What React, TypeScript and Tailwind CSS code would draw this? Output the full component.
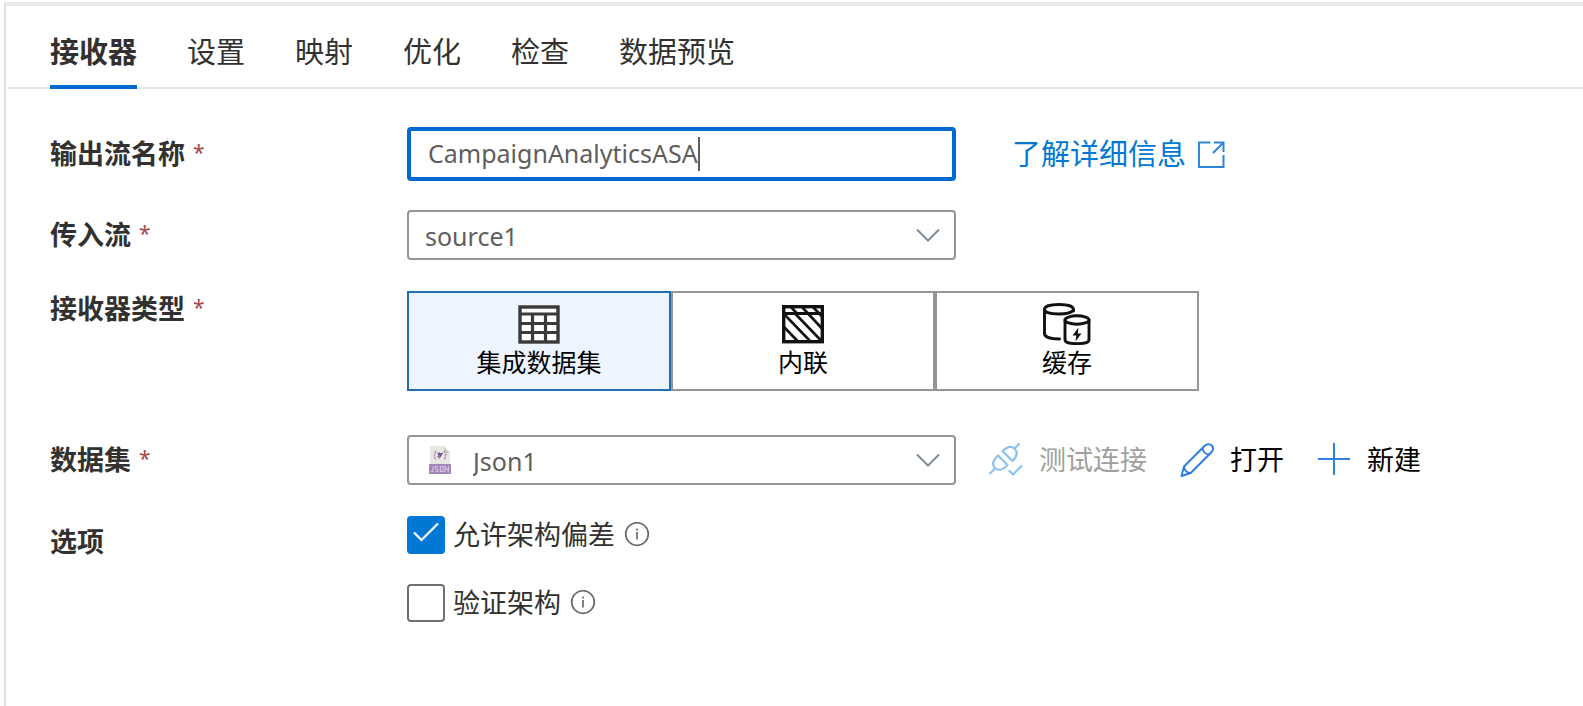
import type { ReactNode } from "react";

const tabs = ["接收器", "设置", "映射", "优化", "检查", "数据预览"];

function Label({ children, htmlFor, required }: { children: ReactNode; htmlFor?: string; required?: boolean }) {
  return (
    <label htmlFor={htmlFor} className="flex h-9 w-[357px] shrink-0 items-center gap-2 text-[27px] font-bold text-[#323130]">
      <span>{children}</span>
      {required && <span className="pb-0.5 text-[21px] font-normal text-[#a4474a]">*</span>}
    </label>
  );
}

function Chevron() {
  return (
    <svg className="pointer-events-none absolute top-0 right-4 h-full w-6" viewBox="0 0 24 46" fill="none" stroke="#7d8c99" strokeWidth="2">
      <path d="M1 17.5 12 28.5 23 17.5" />
    </svg>
  );
}

function TableIcon() {
  return (
    <svg width="48" height="42" viewBox="0 0 48 42" fill="none">
      <rect x="5" y="4" width="38" height="35" fill="#fff" stroke="#3b3a39" strokeWidth="3.4" />
      <path d="M5 11H43M5 20.5H43M5 29.5H43M17.5 11V39M30.5 11V39" stroke="#3b3a39" strokeWidth="3.2" />
    </svg>
  );
}

function InlineIcon() {
  return (
    <svg width="48" height="42" viewBox="0 0 48 42" fill="none" stroke="#111" strokeWidth="2.6">
      <rect x="4.7" y="3.7" width="38.6" height="35" strokeWidth="3.4" />
      <path d="M5 10.5H43" strokeWidth="2.8" />
      <path d="M12 4 18 10.5M23 4 29 10.5M34 4 43 13.5M5 24 19 38.5M5 11 31.5 38.5M16 10.5 43 38.5M29 10.5 43 25.5" />
    </svg>
  );
}

function CacheIcon() {
  return (
    <svg width="48" height="42" viewBox="0 0 48 42" fill="none" stroke="#111" strokeWidth="2.9" strokeLinecap="round">
      <path d="M30.500 8V6.500C30.500 3.500 25 1.500 16 1.500S1.500 3.500 1.500 6.500V30.500C1.500 34 8 36 16.500 36" />
      <path d="M1.500 6.500C1.500 9.500 8 11 16 11C23 11 28 10 30 7.500" />
      <ellipse cx="34" cy="17" rx="12" ry="4.200" fill="#fff" />
      <path d="M22 17V36.500C22 40 26.500 40.600 34 40.600S46 40 46 36.500V17" />
      <path d="M35.500 24.500 29.500 32.500H33.300L32.500 38.500 38.500 30.500H34.800Z" fill="#111" stroke="none" />
    </svg>
  );
}

function JsonIcon() {
  return (
    <svg className="shrink-0" width="22" height="28" viewBox="0 0 22 28">
      <path d="M1 0H15L21 7V19H1Z" fill="#e9e8e0" />
      <path d="M15 0 21 7H15Z" fill="#cfcfc2" />
      <path d="M7 5Q4 9.500 7 14M15 5Q18 9.500 15 14" fill="none" stroke="#a287b8" strokeWidth="1.500" strokeDasharray="2 1" />
      <path d="M8 7H14L11 12Z" fill="#6f4790" />
      <path d="M10 6V13M8 11 14 7" stroke="#8a67a6" strokeWidth="1" />
      <rect x="0" y="18" width="22" height="10" fill="#a588bb" />
      <path d="M4 20.500V25.500H2M9 20.500H6.500V23H9V25.500H6.500M11.500 20.500H14V25.500H11.500ZM16 26V20.500L19.500 25.500V20" fill="none" stroke="#d3c3df" strokeWidth="1.100" />
    </svg>
  );
}

function PlugIcon() {
  return (
    <svg width="34" height="34" viewBox="0 0 34 34" fill="none" stroke="#8cc2ee" strokeWidth="2.200" strokeLinecap="round" strokeLinejoin="round">
      <path d="M1 30.500 6 25.500" />
      <path d="M9 12.500 18.500 22C14.500 26.500 9.500 28 6 25C2.500 21.500 4 17 9 12.500Z" />
      <path d="M13.500 8 23.500 18C28 13.500 29 9 25.500 5.500C22 2.500 17.500 4 13.500 8Z" />
      <path d="M25.500 5.500 30 1" />
      <path d="M20.500 28 24 31.500 32.500 23" />
    </svg>
  );
}

function PencilIcon() {
  return (
    <svg width="34" height="34" viewBox="0 0 34 34" fill="none" stroke="#2a7fdc" strokeWidth="1.900" strokeLinejoin="round">
      <path d="M1.500 33 4 23.500 24.500 3C27 0.500 30 0.800 31.700 2.500S33.500 7 31.200 9.500L10.700 30Z" />
      <path d="M22.500 5C23 9 25.500 11.500 29.500 11.500M4 23.500C4.500 27.500 7 29.800 10.700 30" />
    </svg>
  );
}

function PlusIcon() {
  return (
    <svg width="34" height="34" viewBox="0 0 34 34" fill="none" stroke="#2f80e0" strokeWidth="2">
      <path d="M1 16H33M17 0V32" />
    </svg>
  );
}

function InfoIcon() {
  return (
    <svg width="26" height="26" viewBox="0 0 26 26" fill="none" stroke="#6b6967" strokeWidth="1.700">
      <circle cx="13" cy="12" r="11.300" />
      <path d="M13 10V17.500M13 6.500V8.500" />
    </svg>
  );
}

function SinkType({ icon, children, selected }: { icon: ReactNode; children: ReactNode; selected?: boolean }) {
  return (
    <button
      type="button"
      aria-pressed={!!selected}
      className={
        "flex h-[100px] w-[264px] flex-col items-center border-2 pt-2.5 text-[25px] leading-[34px] text-black " +
        (selected ? "border-[#1f6fb2] bg-[#eff5ff]" : "border-[#979593] bg-white")
      }
    >
      {icon}
      <span>{children}</span>
    </button>
  );
}

function Option({ id, label, defaultChecked }: { id: string; label: string; defaultChecked?: boolean }) {
  return (
    <div className="flex h-[38px] items-center">
      <span className="relative flex">
        <input
          id={id}
          type="checkbox"
          defaultChecked={defaultChecked}
          className="peer size-[38px] appearance-none rounded-[4px] border-2 border-[#72706e] bg-white checked:border-[#0078d4] checked:bg-[#0078d4]"
        />
        <svg className="pointer-events-none absolute inset-0 hidden peer-checked:block" width="38" height="38" viewBox="0 0 38 38" fill="none" stroke="#fff" strokeWidth="2.200">
          <path d="M7 16.500 14.500 24 31 7.500" />
        </svg>
      </span>
      <label htmlFor={id} className="ml-2 text-[27px] text-[#323130]">{label}</label>
      <button type="button" aria-label="信息" className="ml-[9px]">
        <InfoIcon />
      </button>
    </div>
  );
}

export default function App() {
  return (
    <main className="min-h-screen bg-white pt-0.5 pl-1 font-['Noto_Sans','Noto_Sans_CJK_SC',sans-serif]">
      <div className="min-h-[704px] border-t-4 border-l-2 border-t-[#ebebeb] border-l-[#e1e1e1]">
        <nav className="ml-0.5 flex h-[83px] gap-[50px] border-b-2 border-[#e3e3e3] pl-[42px]">
          {tabs.map((tab, i) => (
            <button
              key={tab}
              type="button"
              className={
                "-mb-0.5 border-b-4 pt-3 text-[29px] text-[#323130] " +
                (i === 0 ? "border-[#0069d2] font-bold" : "border-transparent")
              }
            >
              {tab}
            </button>
          ))}
        </nav>

        <form className="flex flex-col pt-[38px] pl-11">
          <div className="flex items-center">
            <Label htmlFor="stream" required>输出流名称</Label>
            <div className="flex h-[54px] w-[549px] items-center rounded-[4px] border-4 border-[#0069d2] pl-[17px]">
              <input
                id="stream"
                defaultValue="CampaignAnalyticsASA"
                className="[field-sizing:content] bg-transparent text-[25px] text-[#605e5c] outline-none"
              />
              <span className="h-[34px] w-0.5 bg-[#605e5c]" />
            </div>
            <a href="#details" className="ml-14 flex items-center gap-3 text-[29px] text-[#0078d4]">
              了解详细信息
              <svg width="27" height="27" viewBox="0 0 27 27" fill="none" stroke="#2f86d9" strokeWidth="2">
                <path d="M12.500 1.500H1V26H25.500V14M16 1.500H25.500V11M25.500 1.500 15 12" />
              </svg>
            </a>
          </div>

          <div className="mt-[29px] flex items-center">
            <Label htmlFor="incoming" required>传入流</Label>
            <div className="relative h-[50px] w-[549px]">
              <select id="incoming" className="size-full appearance-none rounded-[4px] border-2 border-[#979593] bg-white pt-[3px] pl-4 text-[25px] text-[#605e5c]">
                <option>source1</option>
              </select>
              <Chevron />
            </div>
          </div>

          <div className="mt-[31px] flex">
            <Label required>接收器类型</Label>
            <div className="flex">
              <SinkType selected icon={<TableIcon />}>集成数据集</SinkType>
              <SinkType icon={<InlineIcon />}>内联</SinkType>
              <SinkType icon={<CacheIcon />}>缓存</SinkType>
            </div>
          </div>

          <div className="mt-11 flex items-center">
            <Label htmlFor="dataset" required>数据集</Label>
            <div className="relative h-[50px] w-[549px]">
              <select id="dataset" className="size-full appearance-none rounded-[4px] border-2 border-[#979593] bg-white pt-[3px] pl-16 text-[25px] text-[#605e5c]">
                <option>Json1</option>
              </select>
              <span className="pointer-events-none absolute top-[11px] left-[22px]">
                <JsonIcon />
              </span>
              <Chevron />
            </div>
            <div className="ml-[33px] flex gap-[33px] text-[27px] text-black">
              <button type="button" disabled className="flex items-center gap-4 text-[#a19f9d]">
                <PlugIcon />
                测试连接
              </button>
              <button type="button" className="flex items-center gap-4">
                <PencilIcon />
                打开
              </button>
              <button type="button" className="flex items-center gap-4">
                <PlusIcon />
                新建
              </button>
            </div>
          </div>

          <div className="mt-[31px] flex">
            <div className="pt-2">
              <Label>选项</Label>
            </div>
            <div className="flex flex-col gap-[30px]">
              <Option id="drift" label="允许架构偏差" defaultChecked />
              <Option id="validate" label="验证架构" />
            </div>
          </div>
        </form>
      </div>
    </main>
  );
}
